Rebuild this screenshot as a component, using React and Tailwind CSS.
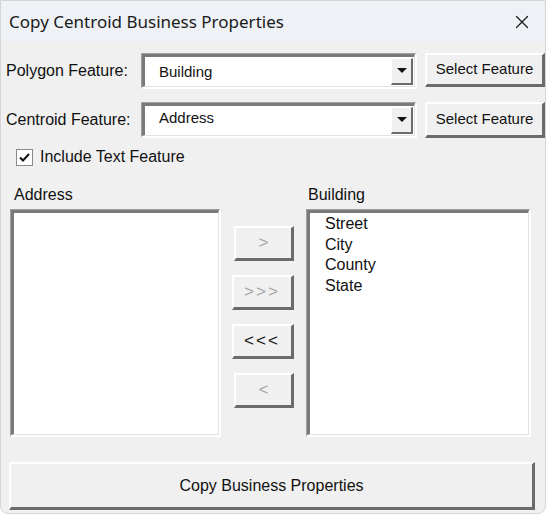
import React from 'react';
import { X } from 'lucide-react';

// raised 3D push button (classic Win32 look)
const RaisedButton = ({ children, className = '', disabled = false }) => (
  <div
    className={`flex items-center justify-center bg-[#f0f0f0] border-t-2 border-l-2 border-t-white border-l-white border-b-[3px] border-r-[3px] border-b-[#6b6b6b] border-r-[#6b6b6b] ${
      disabled ? 'text-[#a6a6a6]' : 'text-[#111]'
    } ${className}`}
  >
    {children}
  </div>
);

// sunken frame used by combo boxes and list boxes
const Sunken = ({ children, className = '' }) => (
  <div className={`border-t border-l border-t-[#a0a0a0] border-l-[#a0a0a0] border-b-2 border-r-2 border-b-white border-r-white ${className}`}>
    <div className="w-full h-full border-t-[3px] border-l-[3px] border-t-[#7a7a7a] border-l-[#7a7a7a] border-b border-r border-b-[#e3e3e3] border-r-[#e3e3e3] bg-white">
      {children}
    </div>
  </div>
);

const Combo = ({ value, textClass = '' }) => (
  <Sunken className="w-[276px] h-[36px]">
    <div className="flex h-full items-stretch">
      <div className={`flex-1 pl-[14px] text-[15px] ${textClass}`}>{value}</div>
      <div className="w-[22px] my-[1px] mr-[1px] flex items-center justify-center bg-[#f0f0f0] border-t border-l border-t-white border-l-white border-b-2 border-r-2 border-b-[#6b6b6b] border-r-[#6b6b6b]">
        <svg width="10" height="6" viewBox="0 0 10 6">
          <path d="M0 0 L10 0 L5 5 Z" fill="#111" />
        </svg>
      </div>
    </div>
  </Sunken>
);

const fields = ['Street', 'City', 'County', 'State'];

export default function App() {
  return (
    <div
      className="w-[546px] h-[514px] bg-[#f0f0f0] border border-[#d4d4d4] rounded-b-[8px] overflow-hidden text-[#111]"
      style={{ fontFamily: '"Liberation Sans", Arial, sans-serif' }}
    >
      {/* title bar */}
      <div className="h-[41px] bg-[#eef2f6] flex items-center justify-between pl-[8px] pr-[12px]">
        <span className="text-[17px] text-[#1a1a1a]" style={{ fontFamily: '"Noto Sans", "Open Sans", sans-serif' }}>
          Copy Centroid Business Properties
        </span>
        <X size={22} strokeWidth={1.3} className="text-[#1a1a1a]" />
      </div>

      <div className="pl-[5px]">
        {/* polygon feature row */}
        <div className="flex items-center mt-[11px] h-[36px]">
          <span className="w-[135px] text-[16px] -mt-[1px]">Polygon Feature:</span>
          <Combo value="Building" textClass="pt-[4px]" />
          <RaisedButton className="ml-[8px] w-[120px] h-[34px] text-[15px] -mt-[3px]">Select Feature</RaisedButton>
        </div>

        {/* centroid feature row */}
        <div className="flex items-center mt-[13px] h-[36px]">
          <span className="w-[135px] text-[16px]">Centroid Feature:</span>
          <Combo value="Address" textClass="pt-[1px]" />
          <RaisedButton className="ml-[8px] w-[120px] h-[36px] text-[15px] -mt-[1px]">Select Feature</RaisedButton>
        </div>

        {/* include text checkbox */}
        <div className="flex items-center mt-[10px] ml-[10px] h-[18px]">
          <div className="w-[17px] h-[17px] bg-white border border-[#8a8a8a] flex items-center justify-center">
            <svg width="11" height="9" viewBox="0 0 11 9">
              <path d="M1 4.5 L4 7.5 L10 1" fill="none" stroke="#111" strokeWidth="2" />
            </svg>
          </div>
          <span className="ml-[7px] text-[16px]">Include Text Feature</span>
        </div>

        {/* field lists */}
        <div className="flex mt-[20px]">
          <div className="ml-[4px] flex flex-col">
            <span className="text-[16px] leading-[18px] ml-[4px]">Address</span>
            <Sunken className="mt-[5px] w-[211px] h-[228px]" />
          </div>

          <div className="ml-[10px] w-[63px] flex flex-col items-center pt-[40px] gap-[14px]">
            <RaisedButton disabled className="w-[60px] h-[35px] text-[17px] ml-[3px]">&gt;</RaisedButton>
            <RaisedButton disabled className="w-[62px] h-[35px] text-[17px] tracking-[2px]">&gt;&gt;&gt;</RaisedButton>
            <RaisedButton className="w-[62px] h-[35px] text-[17px] tracking-[2px]">&lt;&lt;&lt;</RaisedButton>
            <RaisedButton disabled className="w-[60px] h-[35px] text-[17px] ml-[3px]">&lt;</RaisedButton>
          </div>

          <div className="ml-[12px] flex flex-col">
            <span className="text-[16px] leading-[18px] ml-[2px]">Building</span>
            <Sunken className="mt-[5px] w-[225px] h-[228px]">
              <div className="pl-[15px] pt-[1px] flex flex-col text-[16px] leading-[20.5px]">
                {fields.map(f => (
                  <span key={f}>{f}</span>
                ))}
              </div>
            </Sunken>
          </div>
        </div>

        {/* main action */}
        <RaisedButton className="mt-[25px] ml-[3px] w-[526px] h-[48px] text-[16px]">Copy Business Properties</RaisedButton>
      </div>
    </div>
  );
}
